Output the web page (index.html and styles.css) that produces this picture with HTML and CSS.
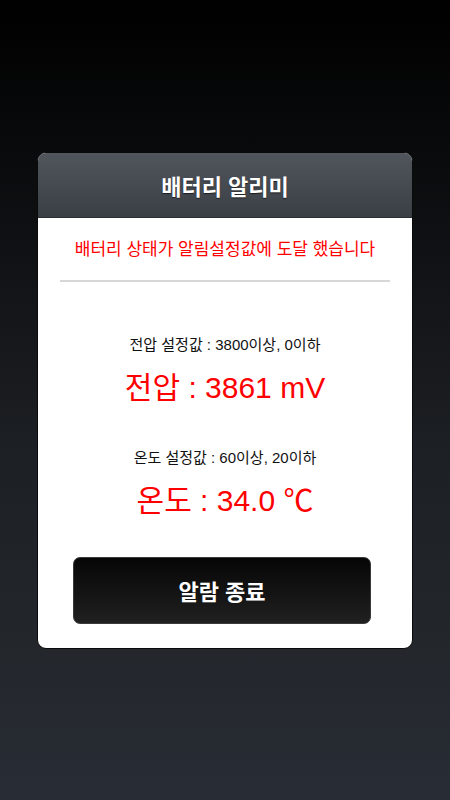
FILE: index.html
```
<!DOCTYPE html>
<html>
<head>
    <title>배터리 알리미</title>
    <link rel="stylesheet" href="styles.css">
</head>
<body>
    <div class="screen">
        <div class="dialog">
            <div class="dialog-header">
                <h1>배터리 알리미</h1>
            </div>
            <div class="dialog-body">
                <p class="alert-msg">배터리 상태가 알림설정값에 도달 했습니다</p>
                <div class="divider"></div>
                <p class="setting">전압 설정값 : 3800이상, 0이하</p>
                <p class="reading">전압 : 3861 mV</p>
                <p class="setting second">온도 설정값 : 60이상, 20이하</p>
                <p class="reading">온도 : 34.0 ℃</p>
                <button class="stop-btn">알람 종료</button>
            </div>
        </div>
    </div>
</body>
</html>
```

FILE: styles.css
```
body {
    margin: 0;
    padding: 0;
    font-family: "Liberation Sans", "Noto Sans CJK KR", sans-serif;
}
.screen {
    width: 450px;
    height: 800px;
    display: flex;
    align-items: center;
    justify-content: center;
    background: linear-gradient(#000000 0%, #0b0c0e 22%, #1c1f23 55%, #23272c 80%, #282c34 100%);
}
.dialog {
    width: 374px;
    height: 495px;
    background-color: #ffffff;
    border: 1px solid #0a0a0a;
    border-radius: 9px;
    overflow: hidden;
    display: flex;
    flex-direction: column;
}
.dialog-header {
    height: 64px;
    background: linear-gradient(#51565d, #3a3e45);
    border-bottom: 1px solid #2a2d32;
    display: flex;
    align-items: center;
    justify-content: center;
}
.dialog-header h1 {
    margin: 0;
    color: #ffffff;
    font-size: 22px;
    font-weight: bold;
    text-shadow: 0 1px 1px rgba(0, 0, 0, 0.6);
}
.dialog-body {
    flex: 1;
    display: flex;
    flex-direction: column;
    align-items: center;
    padding-top: 22px;
}
.alert-msg {
    margin: 0;
    color: #ff0000;
    font-size: 17px;
    line-height: 20px;
}
.divider {
    width: 330px;
    height: 2px;
    margin-top: 20px;
    background-color: #d6d7d9;
}
.setting {
    margin: 54px 0 0;
    color: #111111;
    font-size: 15px;
    line-height: 18px;
}
.setting.second {
    margin-top: 43px;
}
.reading {
    margin: 16px 0 0;
    color: #ff0000;
    font-size: 30px;
    line-height: 36px;
}
.stop-btn {
    margin-top: 38px;
    margin-right: 6px;
    width: 298px;
    height: 67px;
    border: 1px solid #3a3a3a;
    border-radius: 7px;
    background: linear-gradient(#060606, #202020);
    color: #ffffff;
    font-family: "Liberation Sans", "Noto Sans CJK KR", sans-serif;
    font-size: 22px;
    font-weight: bold;
    cursor: pointer;
}
```
